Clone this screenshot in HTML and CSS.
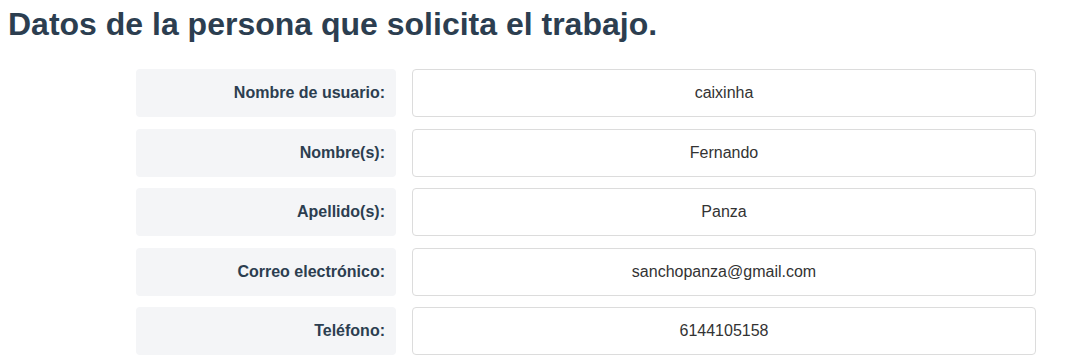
FILE: index.html
```html
<!DOCTYPE html>
<html lang="es">
<head>
  <meta charset="UTF-8" />
  <meta name="viewport" content="width=device-width, initial-scale=1.0"/>
  <title>Datos del solicitante</title>
  <link rel="stylesheet" href="styles.css">
</head>
<body>

<h1>Datos de la persona que solicita el trabajo.</h1>

<form class="datos">
  <div class="fila">
    <label for="usuario">Nombre de usuario:</label>
    <input type="text" id="usuario" value="caixinha" readonly>
  </div>
  <div class="fila">
    <label for="nombre">Nombre(s):</label>
    <input type="text" id="nombre" value="Fernando" readonly>
  </div>
  <div class="fila">
    <label for="apellido">Apellido(s):</label>
    <input type="text" id="apellido" value="Panza" readonly>
  </div>
  <div class="fila">
    <label for="correo">Correo electrónico:</label>
    <input type="text" id="correo" value="sanchopanza@gmail.com" readonly>
  </div>
  <div class="fila">
    <label for="telefono">Teléfono:</label>
    <input type="text" id="telefono" value="6144105158" readonly>
  </div>
</form>

</body>
</html>
```

FILE: styles.css
```css
body {
  font-family: 'Liberation Sans', Arial, sans-serif;
  margin: 0;
  padding: 8px;
  color: #2c3e50;
  background: #fff;
}
h1 {
  font-size: 32px;
  font-weight: bold;
  margin: 0 0 28px 0;
  line-height: 33px;
}
.datos {
  width: 900px;
  margin-left: 128px;
}
.fila {
  display: flex;
  gap: 16px;
  margin-bottom: 11.5px;
}
label {
  width: 260px;
  height: 48px;
  box-sizing: border-box;
  background: #f4f5f7;
  border-radius: 4px;
  display: flex;
  align-items: center;
  justify-content: flex-end;
  padding-right: 11px;
  font-weight: bold;
  font-size: 16px;
}
input[type="text"] {
  flex: 1;
  height: 48px;
  box-sizing: border-box;
  border: 1px solid #dcdcdc;
  border-radius: 4px;
  text-align: center;
  font-family: 'Liberation Sans', Arial, sans-serif;
  font-size: 16px;
  color: #333;
  padding: 0 8px;
  outline: none;
}
```
